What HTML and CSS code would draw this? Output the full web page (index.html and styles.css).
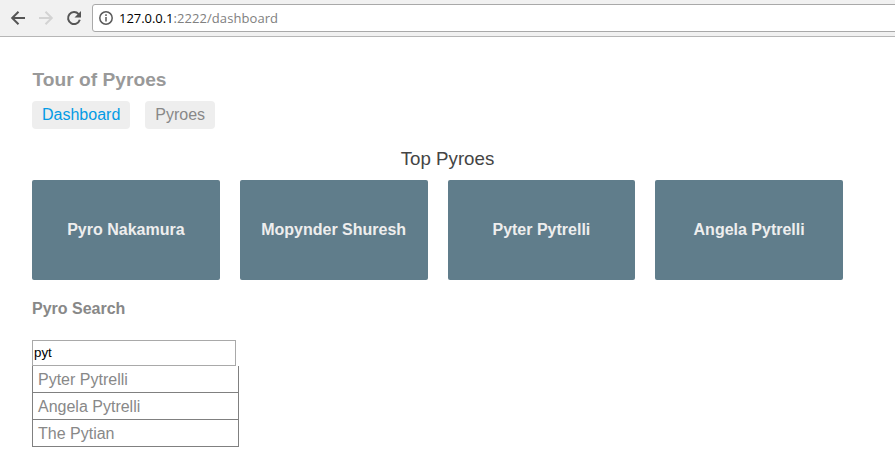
FILE: index.html
```html
<!DOCTYPE html>
<html lang="en">
<head>
<meta charset="utf-8">
<title>Tour of Pyroes</title>
<link rel="stylesheet" href="styles.css">
</head>
<body>
<header class="toolbar">
  <svg class="nav-icon" viewBox="0 0 16 16"><path d="M15 8H2.5M8.5 1.7L2.2 8l6.3 6.3"/></svg>
  <svg class="nav-icon disabled" viewBox="0 0 16 16"><path d="M1 8h12.5M7.5 1.7L13.8 8l-6.3 6.3"/></svg>
  <svg class="nav-icon" viewBox="0 0 16 16"><path d="M12.6 4.1A6 6 0 1 0 13.8 9.8"/><path class="tip" d="M15 1v6.5H8.5z"/></svg>
  <div class="address">
    <svg class="info" viewBox="0 0 14 14"><circle cx="7" cy="7" r="6.2"/><path d="M7 6v4.5M7 3.3v1.6"/></svg>
    <span class="url"><span class="host">127.0.0.1</span>:2222/dashboard</span>
  </div>
</header>
<main class="page">
  <h1>Tour of Pyroes</h1>
  <nav><a class="active">Dashboard</a><a>Pyroes</a></nav>
  <h3>Top Pyroes</h3>
  <section class="grid">
    <div class="card">Pyro Nakamura</div>
    <div class="card">Mopynder Shuresh</div>
    <div class="card">Pyter Pytrelli</div>
    <div class="card">Angela Pytrelli</div>
  </section>
  <section class="search">
    <h4>Pyro Search</h4>
    <input type="text" value="pyt" aria-label="Pyro Search">
    <div class="result">Pyter Pytrelli</div>
    <div class="result">Angela Pytrelli</div>
    <div class="result">The Pytian</div>
  </section>
</main>
</body>
</html>
```
FILE: styles.css
```css
* { box-sizing: border-box; }
body {
  margin: 0;
  background: #fff;
  color: #888;
  font: 16px/18px "Liberation Sans", Arial, sans-serif;
  overflow: hidden;
}
.toolbar {
  display: flex;
  align-items: center;
  height: 37px;
  padding-left: 10px;
  background: #f1f1f1;
  border-bottom: 1px solid #b6b6b6;
}
.nav-icon {
  flex: none;
  width: 16px;
  height: 16px;
  margin-right: 12px;
  fill: none;
  stroke: #555;
  stroke-width: 2;
}
.nav-icon .tip { fill: #555; stroke: none; }
.nav-icon.disabled { stroke: #d3d3d3; }
.address {
  display: flex;
  align-items: center;
  flex: 1;
  height: 28px;
  margin-left: -2px;
  margin-right: -4px;
  padding-left: 6px;
  background: #fff;
  border: 1px solid #a9a9a9;
  border-radius: 3px;
}
.info {
  width: 14px;
  height: 14px;
  margin-right: 6px;
  fill: none;
  stroke: #5a5a5a;
  stroke-width: 1.5;
}
.url {
  font: 13px/18px "Open Sans", sans-serif;
  letter-spacing: 0.08px;
  color: #808080;
}
.host { color: #000; letter-spacing: -0.05px; }
.page { padding: 32px 32px 0; }
h1 {
  margin: 0 0 11px;
  padding-left: 0.5px;
  font-size: 19.2px;
  line-height: 21px;
  color: #999;
}
nav { display: flex; gap: 15px; }
nav a {
  height: 28px;
  padding: 5px 10px;
  background: #eee;
  border-radius: 4px;
}
nav .active { color: #039be5; }
h3 {
  margin: 19px 0 11px;
  text-align: center;
  font-size: 18.72px;
  line-height: 21px;
  font-weight: normal;
  color: #444;
}
.grid {
  display: grid;
  grid-template-columns: repeat(4, 1fr);
  gap: 20px;
  margin-right: 20px;
}
.card {
  height: 100px;
  display: flex;
  align-items: center;
  justify-content: center;
  background: #607d8b;
  border-radius: 2px;
  color: #eee;
  font-weight: bold;
}
h4 {
  margin: 20px 0 22px;
  font-size: 16px;
  line-height: 18px;
}
input {
  display: block;
  width: 204px;
  height: 26px;
  padding: 0 1px 1px;
  border: 1px solid #a9a9a9;
  font: 13.333px "Liberation Sans", Arial, sans-serif;
  color: #000;
}
.result {
  width: 207px;
  height: 27px;
  padding: 5px;
  line-height: 18px;
  border: 1px solid gray;
  border-top: 0;
}
```
